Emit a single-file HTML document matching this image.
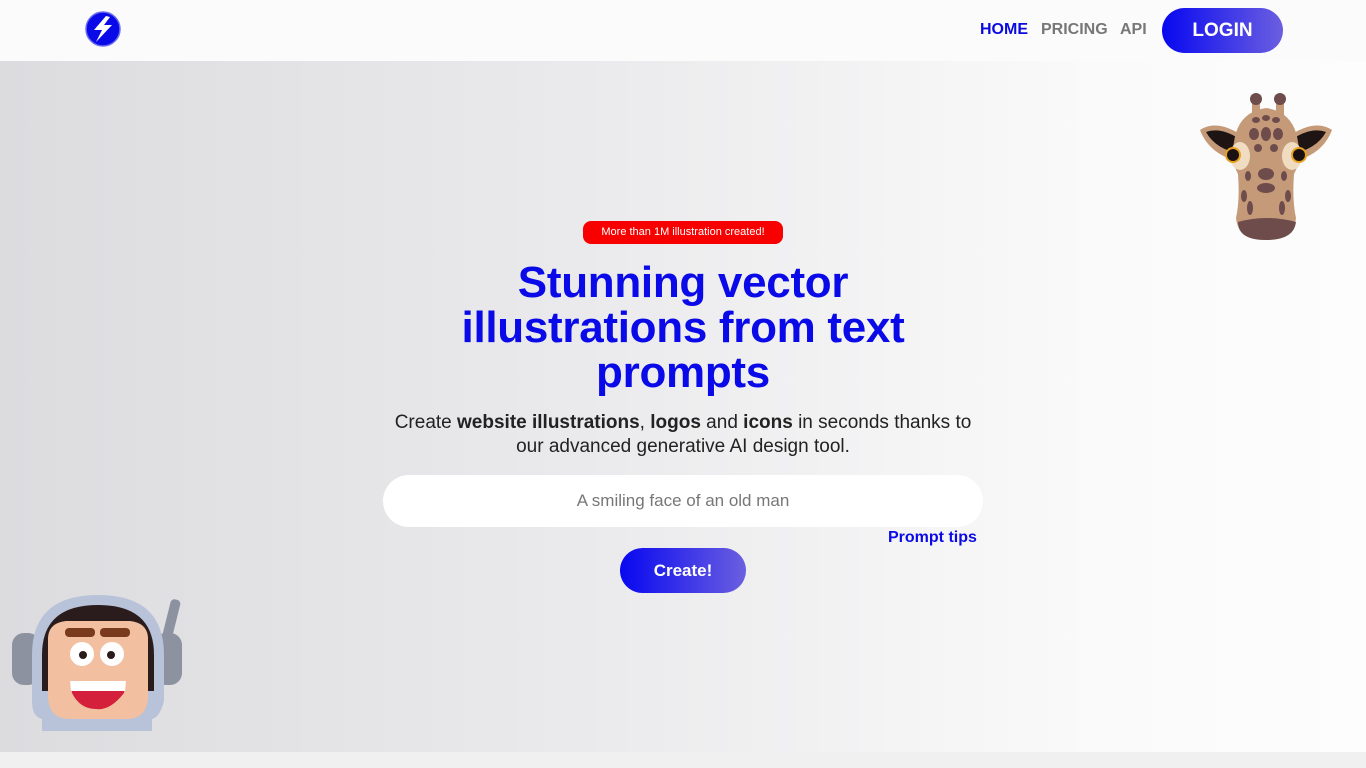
<!DOCTYPE html>
<html><head><meta charset="utf-8"><style>
*{margin:0;padding:0;box-sizing:border-box}
body{width:1366px;height:768px;overflow:hidden;font-family:"Liberation Sans",Roboto,sans-serif;background:#f0f0f0;position:relative}
header{position:absolute;top:0;left:0;width:1366px;height:61px;background:#fbfbfb}
.hero{position:absolute;top:61px;left:0;width:1366px;height:691px;background:linear-gradient(90deg,#dcdcdf 0%,#ebebed 45%,#fafafa 80%,#fdfdfd 100%)}
nav a{position:absolute;top:21px;font-weight:bold;font-size:16px;text-decoration:none;color:#777}
.login{position:absolute;left:1162px;top:8px;width:121px;height:45px;border-radius:23px;background:linear-gradient(90deg,#0808f0,#6b5fe0);color:#fff;font-weight:bold;font-size:19px;text-align:center;line-height:45px}
.badge{position:absolute;left:583px;top:221px;width:200px;height:23px;border-radius:8px;background:#f90000;color:#fff;font-size:11px;text-align:center;line-height:23px}
h1{position:absolute;left:383px;top:260px;width:600px;text-align:center;color:#0a0ae8;font-size:44px;line-height:45px;font-weight:bold;letter-spacing:-0.3px}
.sub{position:absolute;left:383px;top:411px;width:600px;text-align:center;font-size:19px;line-height:24px;color:#222}
.input{position:absolute;left:383px;top:475px;width:600px;height:52px;border-radius:26px;background:#fff;text-align:center;line-height:52px;font-size:17px;color:#777}
.tips{position:absolute;left:888px;top:529px;font-weight:bold;font-size:16px;color:#0a0ae8}
.create{position:absolute;left:620px;top:548px;width:126px;height:45px;border-radius:23px;background:linear-gradient(90deg,#0808f0,#6b5fe0);color:#fff;font-weight:bold;font-size:17px;text-align:center;line-height:45px}
</style></head><body>
<header>
<svg style="position:absolute;left:84px;top:10px" width="38" height="38" viewBox="0 0 38 38"><circle cx="19" cy="19" r="17" fill="#0a0ae8" stroke="#6a6af0" stroke-width="1.5"/><path d="M22 6 L10 20 L18 20 L12 32 L28 15 L20 15 L26 7 Z" fill="#fff"/></svg>
<nav><a style="left:980px;color:#0a0ae0">HOME</a><a style="left:1041px">PRICING</a><a style="left:1120px">API</a></nav>
<div class="login">LOGIN</div>
</header>
<div class="hero"></div>
<svg style="position:absolute;left:1198px;top:90px" width="136" height="152" viewBox="0 0 136 152">
<path d="M2 40 Q20 28 48 48 L44 72 Q12 66 2 40Z" fill="#c49a78"/><path d="M8 42 Q24 36 46 52 L44 64 Q18 60 8 42Z" fill="#1e1414"/>
<path d="M134 40 Q116 28 88 48 L92 72 Q124 66 134 40Z" fill="#c49a78"/><path d="M128 42 Q112 36 90 52 L92 64 Q118 60 128 42Z" fill="#1e1414"/>
<rect x="54" y="8" width="8" height="26" fill="#c49a78"/><rect x="78" y="8" width="8" height="26" fill="#c49a78"/>
<circle cx="58" cy="9" r="6" fill="#6e4c4c"/><circle cx="82" cy="9" r="6" fill="#6e4c4c"/>
<path d="M36 52 Q40 22 68 18 Q96 22 100 52 Q104 70 96 84 Q94 110 98 128 Q96 150 68 150 Q40 150 38 128 Q42 110 40 84 Q32 70 36 52Z" fill="#c49a78"/>
<path d="M40 132 Q68 124 98 132 Q96 150 68 150 Q40 150 40 132Z" fill="#6e4c4c"/>
<g fill="#6e4c4c"><ellipse cx="58" cy="30" rx="4" ry="3"/><ellipse cx="68" cy="28" rx="4" ry="3"/><ellipse cx="78" cy="30" rx="4" ry="3"/><ellipse cx="56" cy="44" rx="5" ry="6"/><ellipse cx="68" cy="44" rx="5" ry="7"/><ellipse cx="80" cy="44" rx="5" ry="6"/><ellipse cx="60" cy="58" rx="4" ry="4"/><ellipse cx="76" cy="58" rx="4" ry="4"/><ellipse cx="68" cy="84" rx="8" ry="6"/><ellipse cx="68" cy="98" rx="9" ry="5"/><ellipse cx="50" cy="86" rx="3" ry="5"/><ellipse cx="86" cy="86" rx="3" ry="5"/><ellipse cx="46" cy="106" rx="3" ry="6"/><ellipse cx="90" cy="106" rx="3" ry="6"/><ellipse cx="52" cy="118" rx="3" ry="7"/><ellipse cx="84" cy="118" rx="3" ry="7"/></g>
<ellipse cx="42" cy="66" rx="10" ry="14" fill="#f0dcc0"/><ellipse cx="94" cy="66" rx="10" ry="14" fill="#f0dcc0"/>
<circle cx="35" cy="65" r="8" fill="#e8a020"/><circle cx="35" cy="65" r="6" fill="#1a1212"/>
<circle cx="101" cy="65" r="8" fill="#e8a020"/><circle cx="101" cy="65" r="6" fill="#1a1212"/>
</svg>
<svg style="position:absolute;left:10px;top:595px" width="176" height="136" viewBox="0 0 176 136">
<rect x="156" y="4" width="10" height="44" rx="4" transform="rotate(14 161 26)" fill="#8c929f"/>
<rect x="2" y="38" width="28" height="52" rx="12" fill="#8c929f"/><rect x="144" y="38" width="28" height="52" rx="12" fill="#8c929f"/>
<path d="M22 60 Q22 0 88 0 Q154 0 154 60 L154 106 Q150 122 142 124 L142 136 L32 136 L32 124 Q22 122 22 106Z" fill="#b8c2d8"/>
<path d="M32 60 Q32 10 88 10 Q144 10 144 60 L144 96 L32 96Z" fill="#2a1c1c"/>
<path d="M38 44 Q38 28 56 26 L120 26 Q138 28 138 44 L138 100 Q138 124 116 124 L60 124 Q38 124 38 100Z" fill="#f2c0a0"/>
<rect x="55" y="33" width="30" height="9" rx="4" fill="#7a3a1e"/><rect x="90" y="33" width="30" height="9" rx="4" fill="#7a3a1e"/>
<circle cx="72" cy="59" r="12" fill="#fff"/><circle cx="102" cy="59" r="12" fill="#fff"/>
<circle cx="73" cy="60" r="4" fill="#2a1c1c"/><circle cx="101" cy="60" r="4" fill="#2a1c1c"/>
<path d="M60 86 L116 86 L114 98 Q100 116 86 114 Q70 114 62 98Z" fill="#d4203a"/><path d="M60 86 L116 86 L115 96 L61 96Z" fill="#fff"/>
</svg>
<div class="badge">More than 1M illustration created!</div>
<h1>Stunning vector<br>illustrations from text<br>prompts</h1>
<div class="sub">Create <b>website illustrations</b>, <b>logos</b> and <b>icons</b> in seconds thanks to<br>our advanced generative AI design tool.</div>
<div class="input">A smiling face of an old man</div>
<div class="tips">Prompt tips</div>
<div class="create">Create!</div>
</body></html>
